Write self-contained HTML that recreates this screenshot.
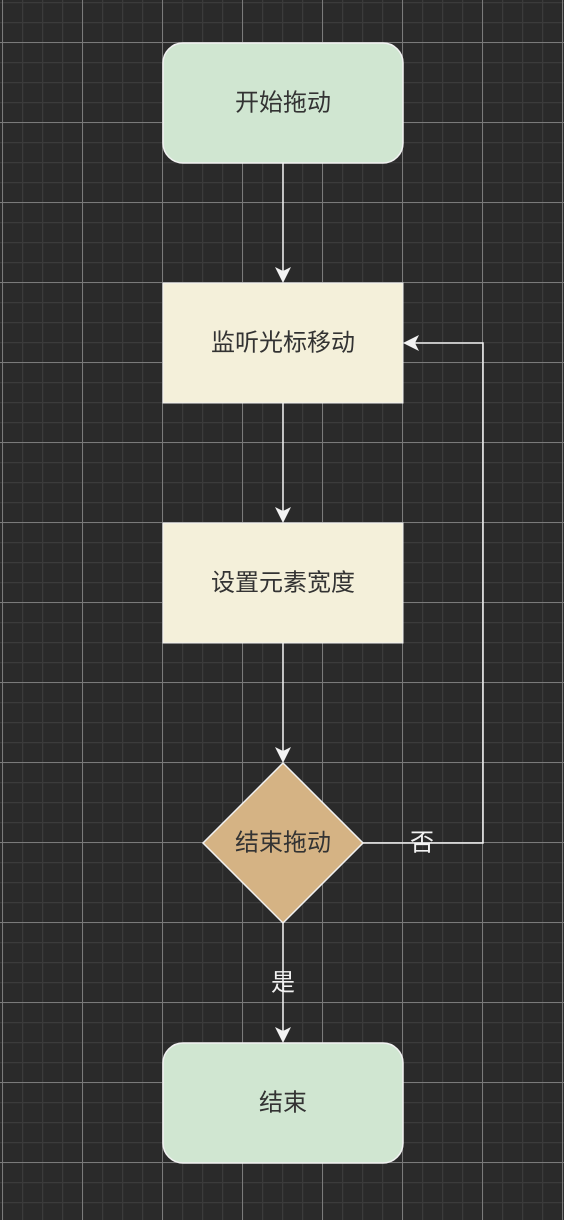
<!DOCTYPE html>
<html><head><meta charset="utf-8"><style>
html,body{margin:0;padding:0;width:564px;height:1220px;overflow:hidden;background:#2a2a2a}
svg{display:block}
text{font-family:"Liberation Sans","Noto Sans CJK SC",sans-serif;font-size:24px;text-anchor:middle;dominant-baseline:central}
</style></head><body>
<svg width="564" height="1220" xmlns="http://www.w3.org/2000/svg">
<defs>
<pattern id="minor" x="2" y="2" width="20" height="20" patternUnits="userSpaceOnUse">
<path d="M0 0.5H20M0.5 0V20" stroke="#3b3b3b" stroke-width="1.5" fill="none"/>
</pattern>
<pattern id="major" x="2" y="42" width="80" height="80" patternUnits="userSpaceOnUse">
<path d="M0 0.5H80M0.5 0V80" stroke="#7a7a7a" stroke-width="1" fill="none"/>
</pattern>
</defs>
<rect width="564" height="1220" fill="#2a2a2a"/>
<rect width="564" height="1220" fill="url(#minor)"/>
<rect width="564" height="1220" fill="url(#major)"/>
<g stroke="#f2f2f2" stroke-width="1.5" fill="none">
<path d="M283 163V272M283 403V512M283 643V752M283 923V1032M363 843H483V343H414"/>
</g>
<g fill="#f2f2f2">
<path d="M275 267L283 283L291 267L283 271Z"/>
<path d="M275 507L283 523L291 507L283 511Z"/>
<path d="M275 747L283 763L291 747L283 751Z"/>
<path d="M275 1027L283 1043L291 1027L283 1031Z"/>
<path d="M419 335L403 343L419 351L415 343Z"/>
</g>
<rect x="163" y="43" width="240" height="120" rx="20" fill="#d0e6d1" stroke="#f2f2f2" stroke-width="1.5"/>
<rect x="163" y="283" width="240" height="120" fill="#f4f0da" stroke="#f2f2f2" stroke-width="1"/>
<rect x="163" y="523" width="240" height="120" fill="#f4f0da" stroke="#f2f2f2" stroke-width="1"/>
<path d="M283 763L363 843L283 923L203 843Z" fill="#d5b384" stroke="#f2f2f2" stroke-width="1.5"/>
<rect x="163" y="1043" width="240" height="120" rx="20" fill="#d0e6d1" stroke="#f2f2f2" stroke-width="1.5"/>
<g fill="#333">
<text x="283" y="103">开始拖动</text>
<text x="283" y="343">监听光标移动</text>
<text x="283" y="583">设置元素宽度</text>
<text x="283" y="843">结束拖动</text>
<text x="283" y="1103">结束</text>
</g>
<g fill="#f2f2f2">
<text x="422" y="843">否</text>
<text x="283" y="983">是</text>
</g>
</svg>
</body></html>
